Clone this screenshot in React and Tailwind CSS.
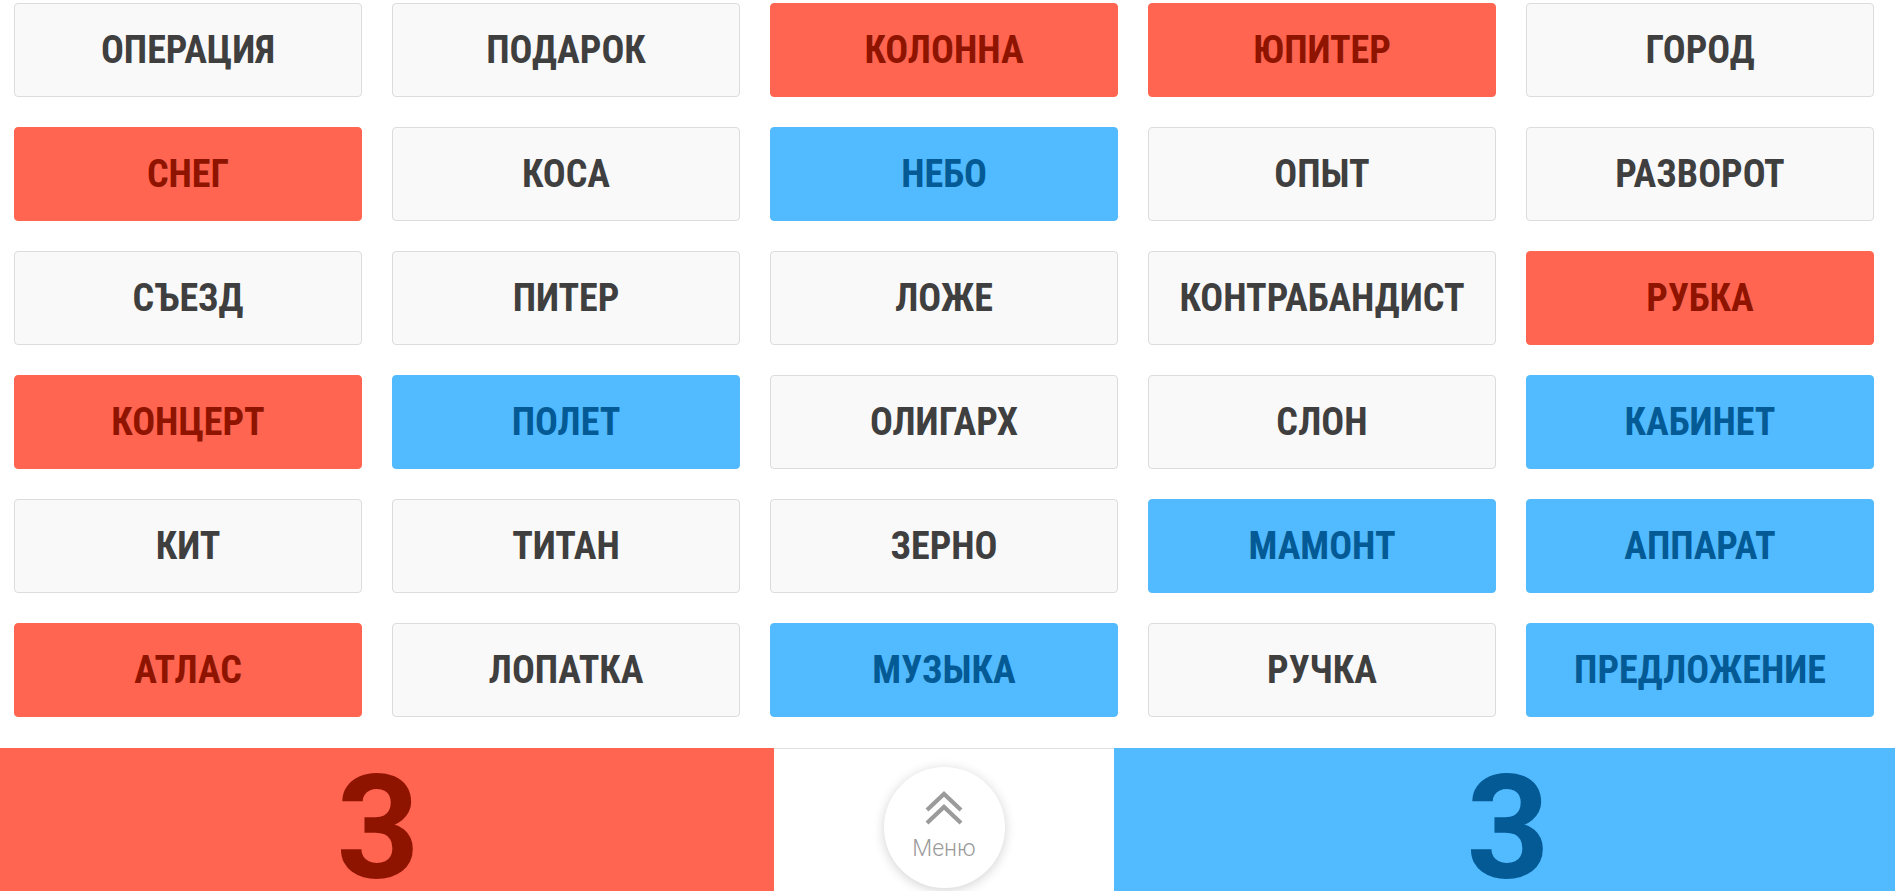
const words = [
  ['ОПЕРАЦИЯ', 'w'], ['ПОДАРОК', 'w'], ['КОЛОННА', 'r'], ['ЮПИТЕР', 'r'], ['ГОРОД', 'w'],
  ['СНЕГ', 'r'], ['КОСА', 'w'], ['НЕБО', 'b'], ['ОПЫТ', 'w'], ['РАЗВОРОТ', 'w'],
  ['СЪЕЗД', 'w'], ['ПИТЕР', 'w'], ['ЛОЖЕ', 'w'], ['КОНТРАБАНДИСТ', 'w'], ['РУБКА', 'r'],
  ['КОНЦЕРТ', 'r'], ['ПОЛЕТ', 'b'], ['ОЛИГАРХ', 'w'], ['СЛОН', 'w'], ['КАБИНЕТ', 'b'],
  ['КИТ', 'w'], ['ТИТАН', 'w'], ['ЗЕРНО', 'w'], ['МАМОНТ', 'b'], ['АППАРАТ', 'b'],
  ['АТЛАС', 'r'], ['ЛОПАТКА', 'w'], ['МУЗЫКА', 'b'], ['РУЧКА', 'w'], ['ПРЕДЛОЖЕНИЕ', 'b'],
];

const cardStyles = {
  w: 'bg-[#f9f9f9] border border-[#dcdcdc] text-[#3f3f3f]',
  r: 'bg-[#ff6550] border border-[#ff6550] text-[#8e1400]',
  b: 'bg-[#52baff] border border-[#52baff] text-[#035a95]',
};

function Card({ word, team }) {
  return (
    <div
      className={`flex h-[94px] items-center justify-center rounded-[4px] ${cardStyles[team]}`}
    >
      <span className="font-['Roboto_Condensed',Roboto,sans-serif] text-[38px] font-bold leading-none [font-stretch:condensed]">
        {word}
      </span>
    </div>
  );
}

function MenuButton() {
  return (
    <button className="mt-[18px] flex h-[121px] w-[121px] flex-col items-center rounded-full bg-white shadow-[0_2px_12px_rgba(0,0,0,0.18)]">
      <svg
        width="40"
        height="36"
        viewBox="0 0 40 36"
        className="mt-[24px]"
        fill="none"
        stroke="#9b9b9b"
        strokeWidth="4.2"
      >
        <polyline points="3,19 20,3 37,19" />
        <polyline points="3,32 20,16 37,32" />
      </svg>
      <span className="mt-[10px] font-['Roboto',sans-serif] text-[23px] font-light leading-none text-[#9a9a9a]">
        Меню
      </span>
    </button>
  );
}

export default function App() {
  return (
    <div className="flex h-[891px] w-[1895px] flex-col overflow-hidden bg-white font-['Roboto',sans-serif]">
      <div className="grid grid-cols-[repeat(5,348px)] gap-x-[30px] gap-y-[30px] pl-[14px] pt-[3px] pb-[31px]">
        {words.map(([word, team]) => (
          <Card key={word} word={word} team={team} />
        ))}
      </div>

      <div className="flex h-[143px]">
        <div className="flex w-[774px] justify-center bg-[#ff6550] pr-[18px] pt-[20px]">
          <span className="text-[145px] font-bold leading-[120px] text-[#8e1400]">3</span>
        </div>
        <div className="flex w-[340px] justify-center border-t border-[#e0e0e0]">
          <MenuButton />
        </div>
        <div className="flex flex-1 justify-center bg-[#52baff] pl-[7px] pt-[20px]">
          <span className="text-[145px] font-bold leading-[120px] text-[#035a95]">3</span>
        </div>
      </div>
    </div>
  );
}
